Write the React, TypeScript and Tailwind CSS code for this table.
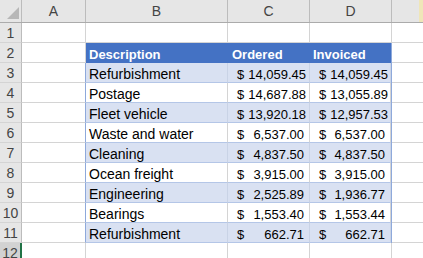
import React from 'react';

const rows = [
  ['Refurbishment', '14,059.45', '14,059.45'],
  ['Postage', '14,687.88', '13,055.89'],
  ['Fleet vehicle', '13,920.18', '12,957.53'],
  ['Waste and water', '6,537.00', '6,537.00'],
  ['Cleaning', '4,837.50', '4,837.50'],
  ['Ocean freight', '3,915.00', '3,915.00'],
  ['Engineering', '2,525.89', '1,936.77'],
  ['Bearings', '1,553.40', '1,553.44'],
  ['Refurbishment', '662.71', '662.71'],
];

const cols = 'grid grid-cols-[22px_64px_142px_82px_82px_1fr]';

function RowNum({ n, active }: { n: number; active?: boolean }) {
  return (
    <div
      className={
        'flex h-5 items-center justify-center border-b border-b-[#d4d4d4] text-[14px] text-[#444] ' +
        (active ? 'bg-[#d2d2d2] border-r-2 border-r-[#217346]' : 'bg-[#e6e6e6] border-r border-r-[#bcbcbc]')
      }
    >
      {n}
    </div>
  );
}

function Money({ v, band }: { v: string; band: boolean }) {
  return (
    <div
      className={
        'flex h-5 items-end justify-between gap-[4px] border-r border-b pb-[1px] pl-[9px] pr-[5px] ' +
        (band ? 'bg-[#d9e1f2] border-b-[#b4c6e7] border-r-[#c9d3e6]' : 'bg-white border-b-[#b4c6e7] border-r-[#d4d4d4]')
      }
    >
      <span>$</span>
      <span>{v}</span>
    </div>
  );
}

export default function App() {
  return (
    <div
      className="h-[258px] w-[423px] overflow-hidden bg-white text-[13px] leading-none text-black"
      style={{ fontFamily: '"Liberation Sans", Arial, sans-serif' }}
    >
      <div className={cols + ' h-[23px] bg-[#e6e6e6] text-[14px] text-[#444] border-b border-[#ababab]'}>
        <div className="relative border-r border-[#bcbcbc]">
          <svg className="absolute right-[2px] bottom-[3px]" width="12" height="12" viewBox="0 0 12 12">
            <polygon points="12,0 12,12 0,12" fill="#b7b7b7" />
          </svg>
        </div>
        {['A', 'B', 'C', 'D'].map((c) => (
          <div key={c} className="flex items-center justify-center border-r border-[#bcbcbc]">
            {c}
          </div>
        ))}
        <div className="relative">
          <div className="absolute top-0 right-0 h-full w-[4px] bg-[#efe6b8]" />
        </div>
      </div>

      <div className={cols}>
        <RowNum n={1} />
        <div className="h-5 border-r border-b border-[#d4d4d4]" />
        <div className="h-5 border-r border-b border-[#d4d4d4]" />
        <div className="h-5 border-r border-b border-[#d4d4d4]" />
        <div className="h-5 border-r border-b border-[#d4d4d4]" />
        <div className="h-5 border-b border-[#d4d4d4]" />

        <RowNum n={2} />
        <div className="h-5 border-r border-b border-[#d4d4d4]" />
        <div className="flex h-5 items-end bg-[#4472c4] pb-[2px] pl-[3px] font-bold text-white">Description</div>
        <div className="flex h-5 items-end bg-[#4472c4] pb-[2px] pl-[4px] font-bold text-white">Ordered</div>
        <div className="flex h-5 items-end border-r border-[#8ea9db] bg-[#4472c4] pb-[2px] pl-[3px] font-bold text-white">
          Invoiced
        </div>
        <div className="h-5 border-b border-[#d4d4d4]" />

        {rows.map(([d, o, i], k) => {
          const band = k % 2 === 0;
          return (
            <React.Fragment key={k}>
              <RowNum n={k + 3} />
              <div className="h-5 border-r border-b border-r-[#8ea9db] border-b-[#d4d4d4]" />
              <div
                className={
                  'flex h-5 items-end border-r border-b pb-[1px] pl-[3px] text-[14px] ' +
                  (band ? 'bg-[#d9e1f2] border-b-[#b4c6e7] border-r-[#c9d3e6]' : 'bg-white border-b-[#b4c6e7] border-r-[#d4d4d4]')
                }
              >
                {d}
              </div>
              <Money v={o} band={band} />
              <div className="border-r border-[#8ea9db]">
                <Money v={i} band={band} />
              </div>
              <div className="h-5 border-b border-[#d4d4d4]" />
            </React.Fragment>
          );
        })}

        <RowNum n={12} active />
        <div className="h-5 border-r border-b border-[#d4d4d4]" />
        <div className="h-5 border-r border-b border-[#d4d4d4]" />
        <div className="h-5 border-r border-b border-[#d4d4d4]" />
        <div className="h-5 border-r border-b border-[#d4d4d4]" />
        <div className="h-5 border-b border-[#d4d4d4]" />
      </div>
    </div>
  );
}
